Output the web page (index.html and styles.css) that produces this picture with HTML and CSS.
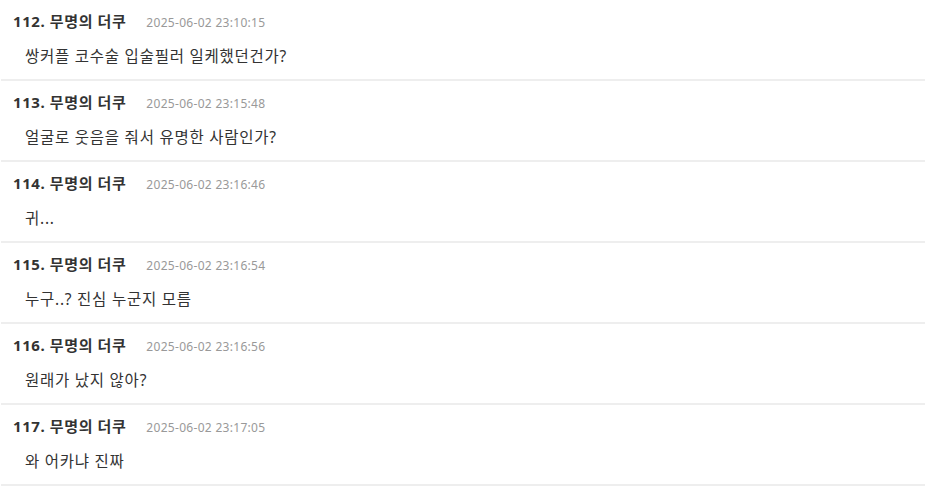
FILE: index.html
```html
<!DOCTYPE html>
<html lang="ko">
<head>
<meta charset="utf-8">
<link rel="stylesheet" href="styles.css">
</head>
<body>
<ul class="comments">
  <li class="comment">
    <div class="head"><span class="author">112. 무명의 더쿠</span><span class="date">2025-06-02 23:10:15</span></div>
    <div class="body">쌍커플 코수술 입술필러 일케했던건가?</div>
  </li>
  <li class="comment">
    <div class="head"><span class="author">113. 무명의 더쿠</span><span class="date">2025-06-02 23:15:48</span></div>
    <div class="body">얼굴로 웃음을 줘서 유명한 사람인가?</div>
  </li>
  <li class="comment">
    <div class="head"><span class="author">114. 무명의 더쿠</span><span class="date">2025-06-02 23:16:46</span></div>
    <div class="body">귀...</div>
  </li>
  <li class="comment">
    <div class="head"><span class="author">115. 무명의 더쿠</span><span class="date">2025-06-02 23:16:54</span></div>
    <div class="body">누구..? 진심 누군지 모름</div>
  </li>
  <li class="comment">
    <div class="head"><span class="author">116. 무명의 더쿠</span><span class="date">2025-06-02 23:16:56</span></div>
    <div class="body">원래가 났지 않아?</div>
  </li>
  <li class="comment">
    <div class="head"><span class="author">117. 무명의 더쿠</span><span class="date">2025-06-02 23:17:05</span></div>
    <div class="body">와 어카냐 진짜</div>
  </li>
</ul>
</body>
</html>
```
FILE: styles.css
```css
html, body {
  margin: 0;
  padding: 0;
  background: #fff;
}
body {
  font-family: "Noto Sans", "Noto Sans CJK KR", sans-serif;
  color: #333;
}
.comments {
  list-style: none;
  margin: 0;
  padding: 0 0 0 1px;
}
.comment {
  height: 79px;
  box-sizing: content-box;
  border-bottom: 2px solid #eeeeee;
  display: flex;
  flex-direction: column;
}
.head {
  display: flex;
  align-items: baseline;
  gap: 20px;
  padding: 10px 0 0 12px;
  height: 22px;
  line-height: 22px;
}
.author {
  font-size: 15px;
  font-weight: 700;
  letter-spacing: 0.6px;
  color: #333;
}
.date {
  font-size: 12px;
  letter-spacing: 0.3px;
  color: #999;
}
.body {
  padding: 13px 0 0 24px;
  font-size: 15.5px;
  letter-spacing: 0.75px;
  line-height: 22px;
  color: #333;
}
```
